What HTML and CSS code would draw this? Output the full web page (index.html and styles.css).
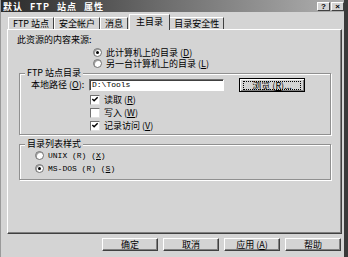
FILE: index.html
```
<!DOCTYPE html>
<html lang="zh-CN">
<head>
<meta charset="utf-8">
<title>默认 FTP 站点 属性</title>
<link rel="stylesheet" href="styles.css">
</head>
<body>
<div class="window">
  <div class="titlebar">
    <span class="title">默认 FTP 站点 属性</span>
    <span class="tbtns"><span class="tbtn">?</span><span class="tbtn">×</span></span>
  </div>
  <div class="tabs">
    <span class="tab">FTP 站点</span>
    <span class="tab">安全帐户</span>
    <span class="tab">消息</span>
    <span class="tab active">主目录</span>
    <span class="tab">目录安全性</span>
  </div>
  <div class="panel">
    <div class="source-label">此资源的内容来源:</div>
    <div class="source-radios">
      <div class="opt"><span class="radio on"></span><span class="lbl">此计算机上的目录 (<u>D</u>)</span></div>
      <div class="opt"><span class="radio"></span><span class="lbl">另一台计算机上的目录 (<u>L</u>)</span></div>
    </div>
    <div class="group group-dir">
      <span class="group-title">FTP 站点目录</span>
      <div class="path-row">
        <span class="path-label">本地路径 (<u>O</u>):</span>
        <span class="path-input">D:\Tools</span>
        <span class="btn browse"><span class="focus">浏览 (<u>R</u>)...</span></span>
      </div>
      <div class="checks">
        <div class="opt"><span class="check on"><svg viewBox="0 0 9 9" width="9" height="9"><path d="M1.5 4 L3.5 6 L7.5 2" fill="none" stroke="#000" stroke-width="1.6"/></svg></span><span class="lbl">读取 (<u>R</u>)</span></div>
        <div class="opt"><span class="check"></span><span class="lbl">写入 (<u>W</u>)</span></div>
        <div class="opt"><span class="check on"><svg viewBox="0 0 9 9" width="9" height="9"><path d="M1.5 4 L3.5 6 L7.5 2" fill="none" stroke="#000" stroke-width="1.6"/></svg></span><span class="lbl">记录访问 (<u>V</u>)</span></div>
      </div>
    </div>
    <div class="group group-list">
      <span class="group-title">目录列表样式</span>
      <div class="list-radios">
        <div class="opt"><span class="radio"></span><span class="lbl mono">UNIX (R) (<u>X</u>)</span></div>
        <div class="opt"><span class="radio on"></span><span class="lbl mono">MS-DOS (R) (<u>S</u>)</span></div>
      </div>
    </div>
  </div>
  <div class="actions">
    <span class="btn">确定</span>
    <span class="btn">取消</span>
    <span class="btn">应用 (<u>A</u>)</span>
    <span class="btn">帮助</span>
  </div>
</div>
</body>
</html>
```

FILE: styles.css
```
* { box-sizing: border-box; }
html, body { margin: 0; padding: 0; }
body {
  width: 348px;
  height: 257px;
  overflow: hidden;
  background: #d4d4d4;
  font-family: "Noto Sans CJK SC", "Liberation Sans", sans-serif;
  font-size: 9px;
  line-height: 10px;
  color: #000;
}
u { text-decoration: underline; }
.window {
  height: 257px;
  display: flex;
  flex-direction: column;
  border-left: 1px solid #9a9a9a;
  border-right: 4px solid #3a3a3a;
}
.titlebar {
  height: 12px;
  display: flex;
  align-items: center;
  justify-content: space-between;
  background: linear-gradient(to right, #2a2a2a 0%, #6a6a6a 45%, #b0b0b0 100%);
  padding-left: 2px;
}
.title {
  color: #fff;
  font-weight: bold;
  font-size: 9px;
  line-height: 11px;
  word-spacing: 4px;
  letter-spacing: 1px;
}
.tbtns { display: flex; gap: 1px; }
.tbtn {
  width: 13px;
  height: 9px;
  background: #d4d4d4;
  border: 1px solid;
  border-color: #fff #404040 #404040 #fff;
  font-family: "Liberation Sans", sans-serif;
  font-weight: bold;
  font-size: 8px;
  line-height: 7px;
  text-align: center;
}
.tabs {
  display: flex;
  align-items: flex-end;
  height: 18px;
  padding-left: 7px;
}
.tab {
  height: 13px;
  padding: 0 4px;
  line-height: 12px;
  border-top: 1px solid #fff;
  border-left: 1px solid #fff;
  border-right: 1px solid #404040;
  white-space: nowrap;
}
.tab.active {
  height: 16px;
  padding: 0 6px;
  line-height: 14px;
  margin: 0 -1px 0 1px;
  position: relative;
  z-index: 1;
  background: #d4d4d4;
}
.panel {
  height: 205px;
  margin: -1px 2px 0 6px;
  border: 1px solid;
  border-color: #fff #404040 #404040 #fff;
  box-shadow: inset -1px -1px 0 #808080;
  padding: 5px 0 0 9px;
}
.source-label { height: 10px; }
.source-radios {
  margin-top: 2px;
  margin-left: 76px;
}
.opt {
  display: flex;
  align-items: center;
  gap: 4px;
  white-space: nowrap;
}
.lbl { line-height: 9px; }
.source-radios .opt { height: 11px; }
.radio {
  width: 9px;
  height: 9px;
  border-radius: 50%;
  background: #fff;
  border: 1px solid #707070;
  box-shadow: inset 1px 1px 0 #a0a0a0;
  display: inline-flex;
  align-items: center;
  justify-content: center;
  flex: none;
}
.radio.on::after {
  content: "";
  width: 3px;
  height: 3px;
  border-radius: 50%;
  background: #000;
}
.check {
  width: 10px;
  height: 10px;
  background: #fff;
  border: 1px solid;
  border-color: #707070 #e0e0e0 #e0e0e0 #707070;
  display: inline-flex;
  align-items: center;
  justify-content: center;
  flex: none;
}
.check svg { display: block; }
.group {
  position: relative;
  margin-left: 2px;
  width: 312px;
  border: 1px solid #909090;
  box-shadow: inset 1px 1px 0 #fff, 1px 1px 0 #fff;
}
.group-title {
  position: absolute;
  top: -6px;
  left: 5px;
  padding: 0 2px;
  background: #d4d4d4;
  line-height: 10px;
  white-space: nowrap;
}
.group-dir {
  margin-top: 4px;
  height: 62px;
  padding: 4px 0 0 11px;
}
.path-row {
  display: flex;
  align-items: center;
  height: 14px;
}
.path-label { width: 58px; white-space: nowrap; }
.path-input {
  width: 135px;
  height: 12px;
  background: #fff;
  border: 1px solid;
  border-color: #707070 #fff #fff #707070;
  box-shadow: inset 1px 1px 0 #404040;
  padding-left: 2px;
  font-family: "Liberation Mono", monospace;
  font-size: 8px;
  line-height: 10px;
}
.btn {
  display: inline-flex;
  align-items: center;
  justify-content: center;
  height: 13px;
  width: 56px;
  background: #d4d4d4;
  border: 1px solid;
  border-color: #fff #404040 #404040 #fff;
  box-shadow: inset -1px -1px 0 #808080;
  white-space: nowrap;
  line-height: 10px;
}
.browse {
  width: 66px;
  height: 14px;
  margin-left: 15px;
  border: 1px solid #000;
  box-shadow: inset 1px 1px 0 #fff, inset -1px -1px 0 #808080;
}
.focus {
  border: 1px dotted #000;
  width: 58px;
  height: 9px;
  line-height: 8px;
  text-align: center;
}
.checks {
  margin-top: 1px;
  margin-left: 59px;
}
.checks .opt { height: 13px; }
.group-list {
  margin-top: 9px;
  height: 36px;
  padding: 4px 0 0 15px;
}
.list-radios .opt { height: 13px; }
.mono { font-family: "Liberation Mono", monospace; font-size: 8px; }
.actions {
  display: flex;
  justify-content: flex-end;
  gap: 5px;
  margin-top: 4px;
  padding-right: 3px;
}
```
